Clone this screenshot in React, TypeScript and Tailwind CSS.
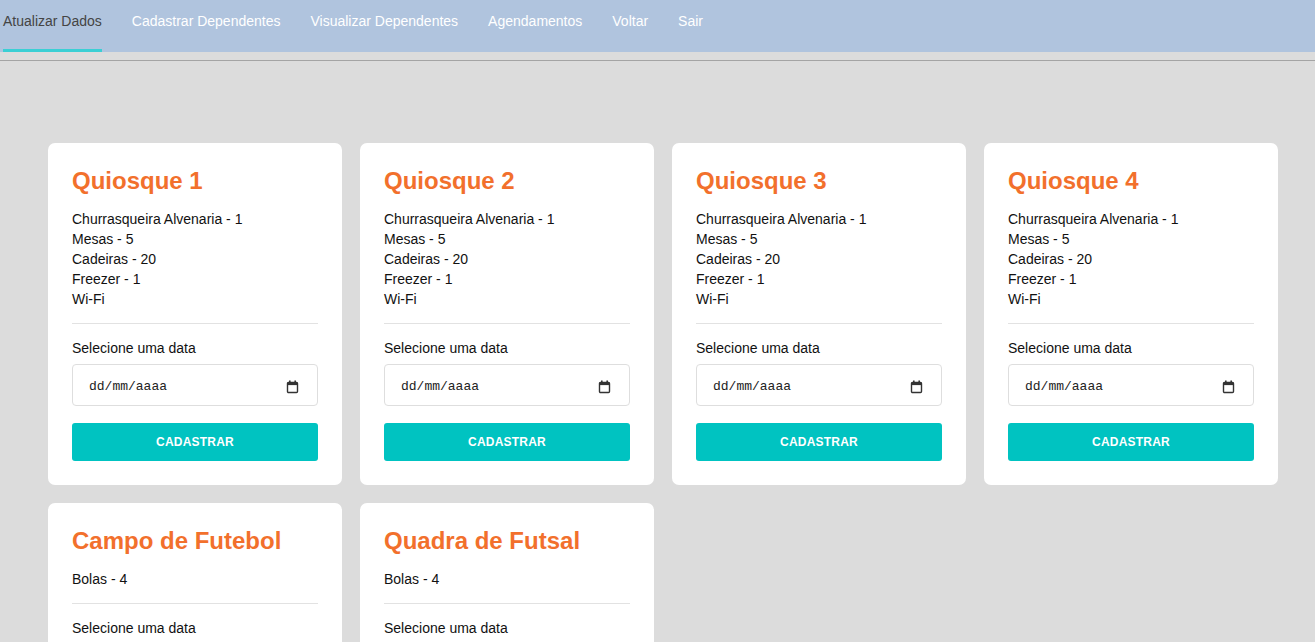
import React from "react";

const navItems = [
  "Atualizar Dados",
  "Cadastrar Dependentes",
  "Visualizar Dependentes",
  "Agendamentos",
  "Voltar",
  "Sair",
];

const quiosqueItems = [
  "Churrasqueira Alvenaria - 1",
  "Mesas - 5",
  "Cadeiras - 20",
  "Freezer - 1",
  "Wi-Fi",
];

const cards = [
  { title: "Quiosque 1", items: quiosqueItems },
  { title: "Quiosque 2", items: quiosqueItems },
  { title: "Quiosque 3", items: quiosqueItems },
  { title: "Quiosque 4", items: quiosqueItems },
  { title: "Campo de Futebol", items: ["Bolas - 4"] },
  { title: "Quadra de Futsal", items: ["Bolas - 4"] },
];

function CalendarIcon() {
  return (
    <svg width="13" height="14" viewBox="0 0 13 14" fill="none">
      <rect x="1.5" y="2.5" width="10" height="10" rx="1" stroke="#333" strokeWidth="1.4" />
      <rect x="1.5" y="2.5" width="10" height="2.6" fill="#333" />
      <rect x="3" y="0.5" width="1.6" height="2.5" fill="#333" />
      <rect x="8.4" y="0.5" width="1.6" height="2.5" fill="#333" />
    </svg>
  );
}

function Card({ title, items }: { title: string; items: string[] }) {
  return (
    <div className="bg-white rounded-[7px] px-[24px] pt-[24px] pb-[24px] flex flex-col">
      <h2 className="text-[24px] leading-[28px] font-bold text-[#f2702c]">{title}</h2>
      <ul className="mt-[14px] text-[14px] leading-[20px] text-[#111]">
        {items.map((it, i) => (
          <li key={i}>{it}</li>
        ))}
      </ul>
      <div className="mt-[14px] h-px bg-[#e2e2e2]" />
      <div className="mt-[14px] text-[14px] leading-[20px] text-[#111]">Selecione uma data</div>
      <div className="mt-[6px] h-[42px] border border-[#dedede] rounded-[4px] flex items-center justify-between pl-[16px] pr-[18px] pt-[3px]">
        <span className="text-[13px] text-[#222]" style={{ fontFamily: '"Liberation Mono", "DejaVu Sans Mono", monospace' }}>
          dd/mm/aaaa
        </span>
        <CalendarIcon />
      </div>
      <button className="mt-[17px] h-[38px] rounded-[3px] bg-[#00c3c1] text-white text-[12px] font-bold tracking-[0.2px]">
        CADASTRAR
      </button>
    </div>
  );
}

export default function App() {
  return (
    <div
      className="min-h-screen bg-[#dcdcdc]"
      style={{ fontFamily: '"Liberation Sans", Arial, sans-serif' }}
    >
      <nav className="h-[52px] bg-[#b0c4de] flex gap-[30px] pl-[3px]">
        {navItems.map((n, i) => (
          <div
            key={n}
            className={
              i === 0
                ? "h-[52px] pt-[13px] text-[14px] leading-[16px] text-[#444] border-b-[3px] border-[#3bcfd4]"
                : "h-[52px] pt-[13px] text-[14px] leading-[16px] text-white"
            }
          >
            {n}
          </div>
        ))}
      </nav>
      <div className="mt-[8px] h-px bg-[#a4a4a4]" />
      <main className="pt-[82px] pl-[48px] pb-[40px]">
        <div className="grid grid-cols-[repeat(4,294px)] gap-[18px]">
          {cards.map((c) => (
            <Card key={c.title} title={c.title} items={c.items} />
          ))}
        </div>
      </main>
    </div>
  );
}
